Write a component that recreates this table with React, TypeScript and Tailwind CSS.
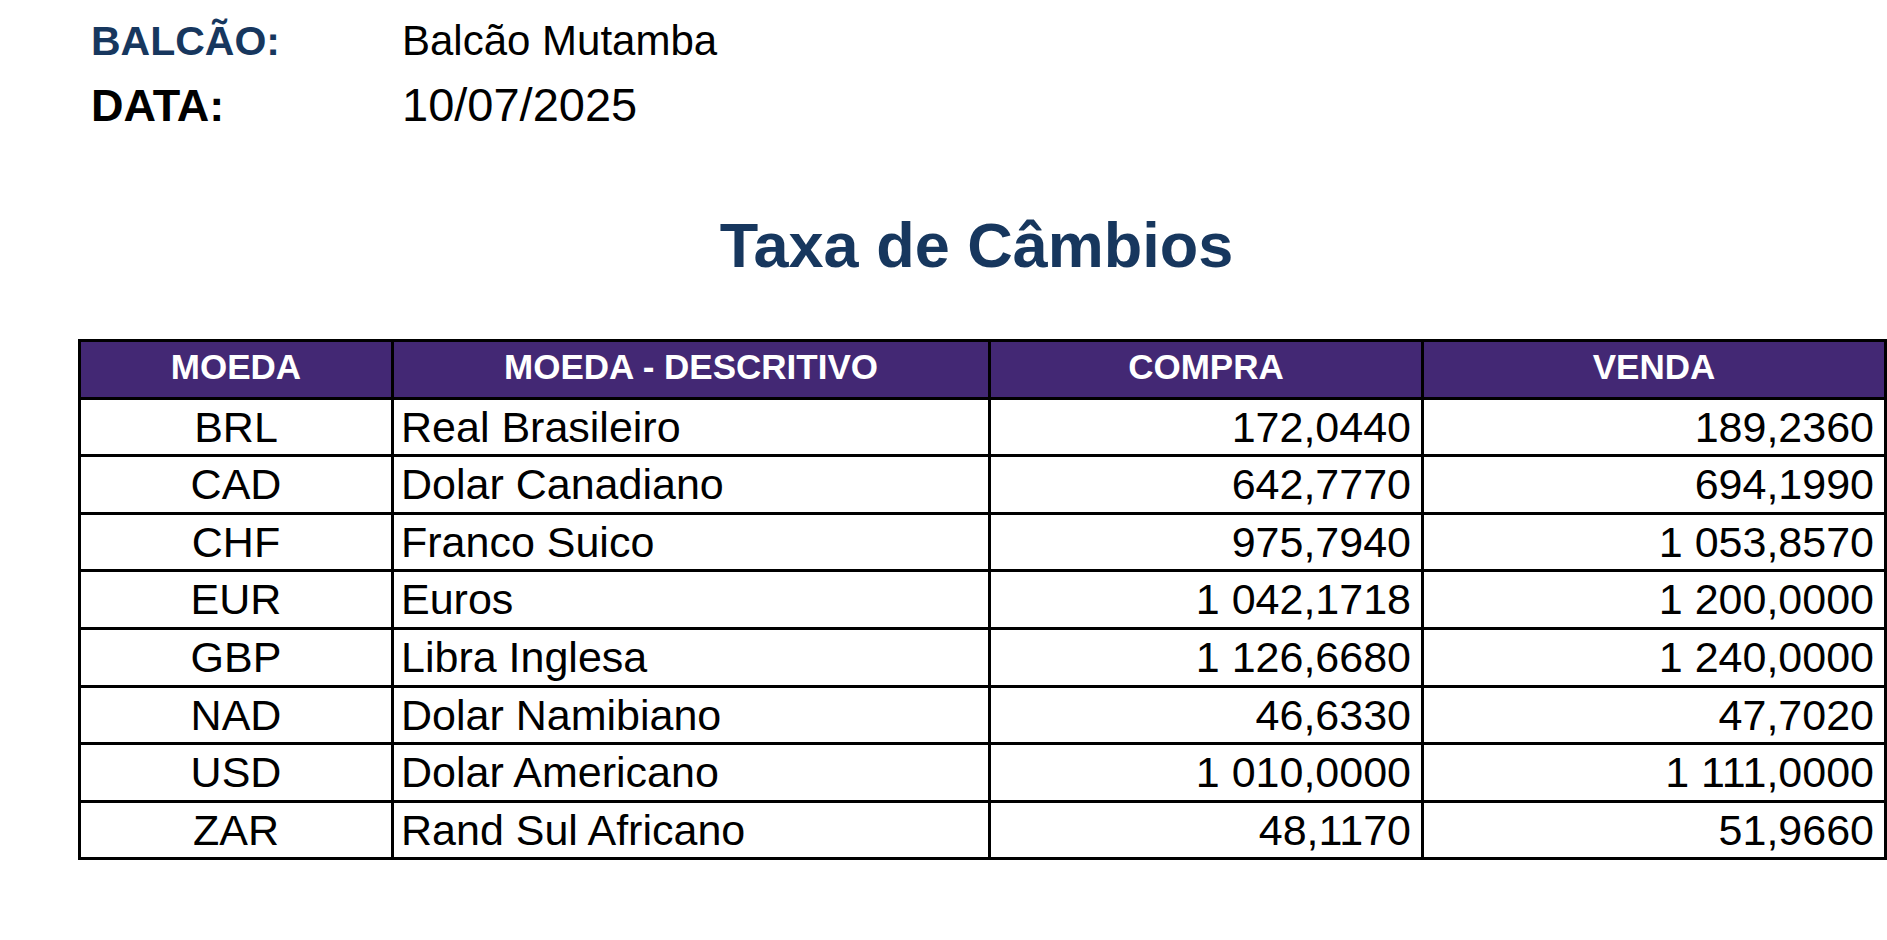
import React from "react";

const rows: { code: string; desc: string; compra: string; venda: string; h: string }[] = [
  { code: "BRL", desc: "Real Brasileiro", compra: "172,0440", venda: "189,2360", h: "h-[57px]" },
  { code: "CAD", desc: "Dolar Canadiano", compra: "642,7770", venda: "694,1990", h: "h-[58px]" },
  { code: "CHF", desc: "Franco Suico", compra: "975,7940", venda: "1 053,8570", h: "h-[57px]" },
  { code: "EUR", desc: "Euros", compra: "1 042,1718", venda: "1 200,0000", h: "h-[58px]" },
  { code: "GBP", desc: "Libra Inglesa", compra: "1 126,6680", venda: "1 240,0000", h: "h-[58px]" },
  { code: "NAD", desc: "Dolar Namibiano", compra: "46,6330", venda: "47,7020", h: "h-[57px]" },
  { code: "USD", desc: "Dolar Americano", compra: "1 010,0000", venda: "1 111,0000", h: "h-[58px]" },
  { code: "ZAR", desc: "Rand Sul Africano", compra: "48,1170", venda: "51,9660", h: "h-[57px]" },
];

const cell = "border-r-[3px] border-b-[3px] border-black flex items-center";

export default function App() {
  return (
    <div
      className="w-[1887px] h-[940px] bg-white text-black overflow-hidden"
      style={{ fontFamily: '"Liberation Sans", Arial, sans-serif' }}
    >
      {/* Header info */}
      <div className="pt-[15px] pl-[91px]">
        <div className="flex items-baseline h-[52px] leading-[52px]">
          <div className="w-[311px] text-[41px] font-bold text-[#17375e]">BALCÃO:</div>
          <div className="text-[42px]">Balcão Mutamba</div>
        </div>
        <div className="flex items-baseline h-[56px] leading-[56px] mt-[10px]">
          <div className="w-[311px] text-[45px] font-bold">DATA:</div>
          <div className="text-[47px]">10/07/2025</div>
        </div>
      </div>

      {/* Title */}
      <div className="pl-[78px] mt-[76px]">
        <div className="w-[1809px] pr-[12px] text-center text-[63px] leading-[72px] font-bold text-[#17375e]">
          Taxa de Câmbios
        </div>
      </div>

      {/* Table */}
      <div className="pl-[78px] mt-[58px]">
        <div className="w-[1809px] border-l-[3px] border-t-[3px] border-black grid grid-cols-[313px_597px_433px_463px]">
          {["MOEDA", "MOEDA - DESCRITIVO", "COMPRA", "VENDA"].map((h) => (
            <div
              key={h}
              className={`${cell} h-[58px] justify-center bg-[#432874] text-white font-bold text-[35px] leading-none pb-[6px]`}
            >
              {h}
            </div>
          ))}
          {rows.map((r) => (
            <React.Fragment key={r.code}>
              <div className={`${cell} ${r.h} justify-center text-[43px] leading-none`}>{r.code}</div>
              <div className={`${cell} ${r.h} justify-start pl-[7px] text-[43px] leading-none`}>{r.desc}</div>
              <div className={`${cell} ${r.h} justify-end pr-[10px] text-[43px] leading-none`}>{r.compra}</div>
              <div className={`${cell} ${r.h} justify-end pr-[10px] text-[43px] leading-none`}>{r.venda}</div>
            </React.Fragment>
          ))}
        </div>
      </div>
    </div>
  );
}
